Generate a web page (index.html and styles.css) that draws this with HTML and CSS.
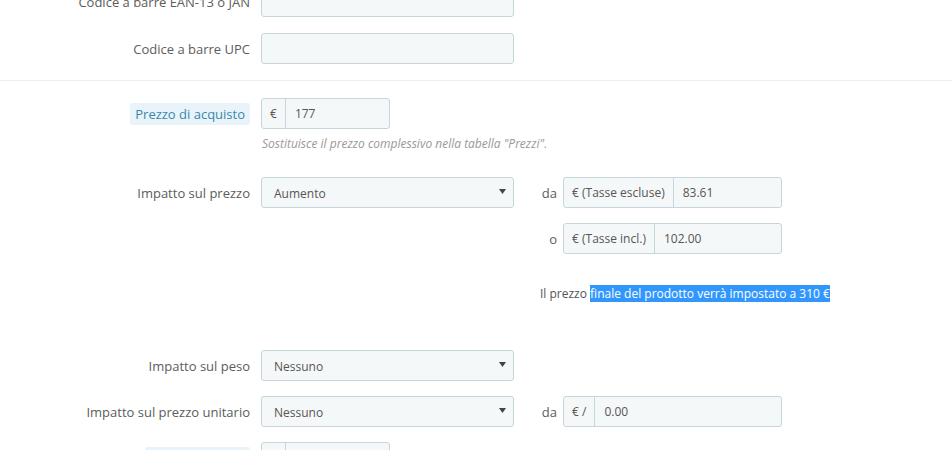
FILE: index.html
```html
<!DOCTYPE html>
<html>
  <head>
    <title>Combinazione - Prezzo</title>
    <link rel="stylesheet" href="styles.css">
  </head>
  <body>
    <div class="pannello">
      <div class="riga">
        <label class="etichetta">Codice a barre EAN-13 o JAN</label>
        <div class="campo"></div>
      </div>
      <div class="riga">
        <label class="etichetta">Codice a barre UPC</label>
        <div class="campo"></div>
      </div>

      <hr class="separatore">

      <div class="riga riga-stretta">
        <label class="etichetta"><span class="suggerimento">Prezzo di acquisto</span></label>
        <div class="gruppo gruppo-corto">
          <span class="addon">€</span>
          <span class="valore">177</span>
        </div>
      </div>
      <p class="aiuto">Sostituisce il prezzo complessivo nella tabella "Prezzi".</p>

      <div class="riga riga-stretta">
        <label class="etichetta">Impatto sul prezzo</label>
        <div class="selezione">Aumento
          <svg class="freccia" width="7" height="5" viewBox="0 0 7 5"><path d="M0 0h7L3.5 5z" fill="#444"/></svg>
        </div>
        <span class="lato">da</span>
        <div class="gruppo">
          <span class="addon">€ (Tasse escluse)</span>
          <span class="valore">83.61</span>
        </div>
      </div>
      <div class="riga riga-stretta">
        <span class="vuoto"></span>
        <span class="lato">o</span>
        <div class="gruppo">
          <span class="addon">€ (Tasse incl.)</span>
          <span class="valore">102.00</span>
        </div>
      </div>
      <p class="finale">Il prezzo <span class="selezionato">finale del prodotto verrà impostato a 310 €</span></p>

      <div class="riga riga-stretta">
        <label class="etichetta">Impatto sul peso</label>
        <div class="selezione">Nessuno
          <svg class="freccia" width="7" height="5" viewBox="0 0 7 5"><path d="M0 0h7L3.5 5z" fill="#444"/></svg>
        </div>
      </div>
      <div class="riga riga-stretta">
        <label class="etichetta">Impatto sul prezzo unitario</label>
        <div class="selezione">Nessuno
          <svg class="freccia" width="7" height="5" viewBox="0 0 7 5"><path d="M0 0h7L3.5 5z" fill="#444"/></svg>
        </div>
        <span class="lato">da</span>
        <div class="gruppo">
          <span class="addon">€ /</span>
          <span class="valore">0.00</span>
        </div>
      </div>
      <div class="riga riga-stretta">
        <label class="etichetta"><span class="suggerimento">Ecotassa (tasse)</span></label>
        <div class="gruppo gruppo-corto">
          <span class="addon">€</span>
          <span class="valore">0.00</span>
        </div>
      </div>
    </div>
  </body>
</html>
```

FILE: styles.css
```css
body {
  margin: 0;
  background-color: #FFF;
  font-family: "Open Sans", "Liberation Sans", sans-serif;
  font-size: 12px;
  color: #555;
  overflow: hidden;
}
.pannello {
  margin-top: -14px;
}
.riga {
  display: flex;
  align-items: center;
  height: 31px;
  margin-bottom: 16px;
}
.riga-stretta {
  margin-bottom: 15px;
}
.etichetta {
  width: 250px;
  margin-right: 11px;
  text-align: right;
  font-size: 13px;
  color: #5C5C5C;
}
.vuoto {
  width: 514px;
}
.suggerimento {
  background-color: #E8F4FA;
  color: #3A87AD;
  padding: 2px 5px;
  border-radius: 2px;
}
.campo {
  width: 253px;
  height: 31px;
  box-sizing: border-box;
  background-color: #F5F8F9;
  border: 1px solid #C7D6DB;
  border-radius: 3px;
}
.selezione {
  position: relative;
  width: 253px;
  height: 31px;
  box-sizing: border-box;
  background-color: #F5F8F9;
  border: 1px solid #C7D6DB;
  border-radius: 3px;
  padding: 0 12px;
  line-height: 31px;
  font-size: 12px;
}
.freccia {
  position: absolute;
  right: 7px;
  top: 11px;
}
.separatore {
  border: none;
  border-top: 1px solid #EEE;
  margin: 1px 0 17px;
}
.gruppo {
  display: flex;
  width: 219px;
  height: 31px;
  box-sizing: border-box;
  background-color: #F5F8F9;
  border: 1px solid #C7D6DB;
  border-radius: 3px;
  line-height: 29px;
}
.gruppo-corto {
  width: 129px;
}
.addon {
  padding: 0 8px;
  border-right: 1px solid #C7D6DB;
  color: #555;
  white-space: nowrap;
}
.valore {
  padding: 0 9px;
}
.lato {
  width: 43px;
  margin-right: 6px;
  text-align: right;
  font-size: 13px;
  color: #5C5C5C;
}
.aiuto {
  margin: -9px 0 24px 262px;
  font-style: italic;
  color: #999;
  line-height: 18px;
}
.finale {
  margin: 32px 0 48px 540px;
  line-height: 16px;
}
.selezionato {
  background-color: #3297FD;
  color: #FFF;
}
```
